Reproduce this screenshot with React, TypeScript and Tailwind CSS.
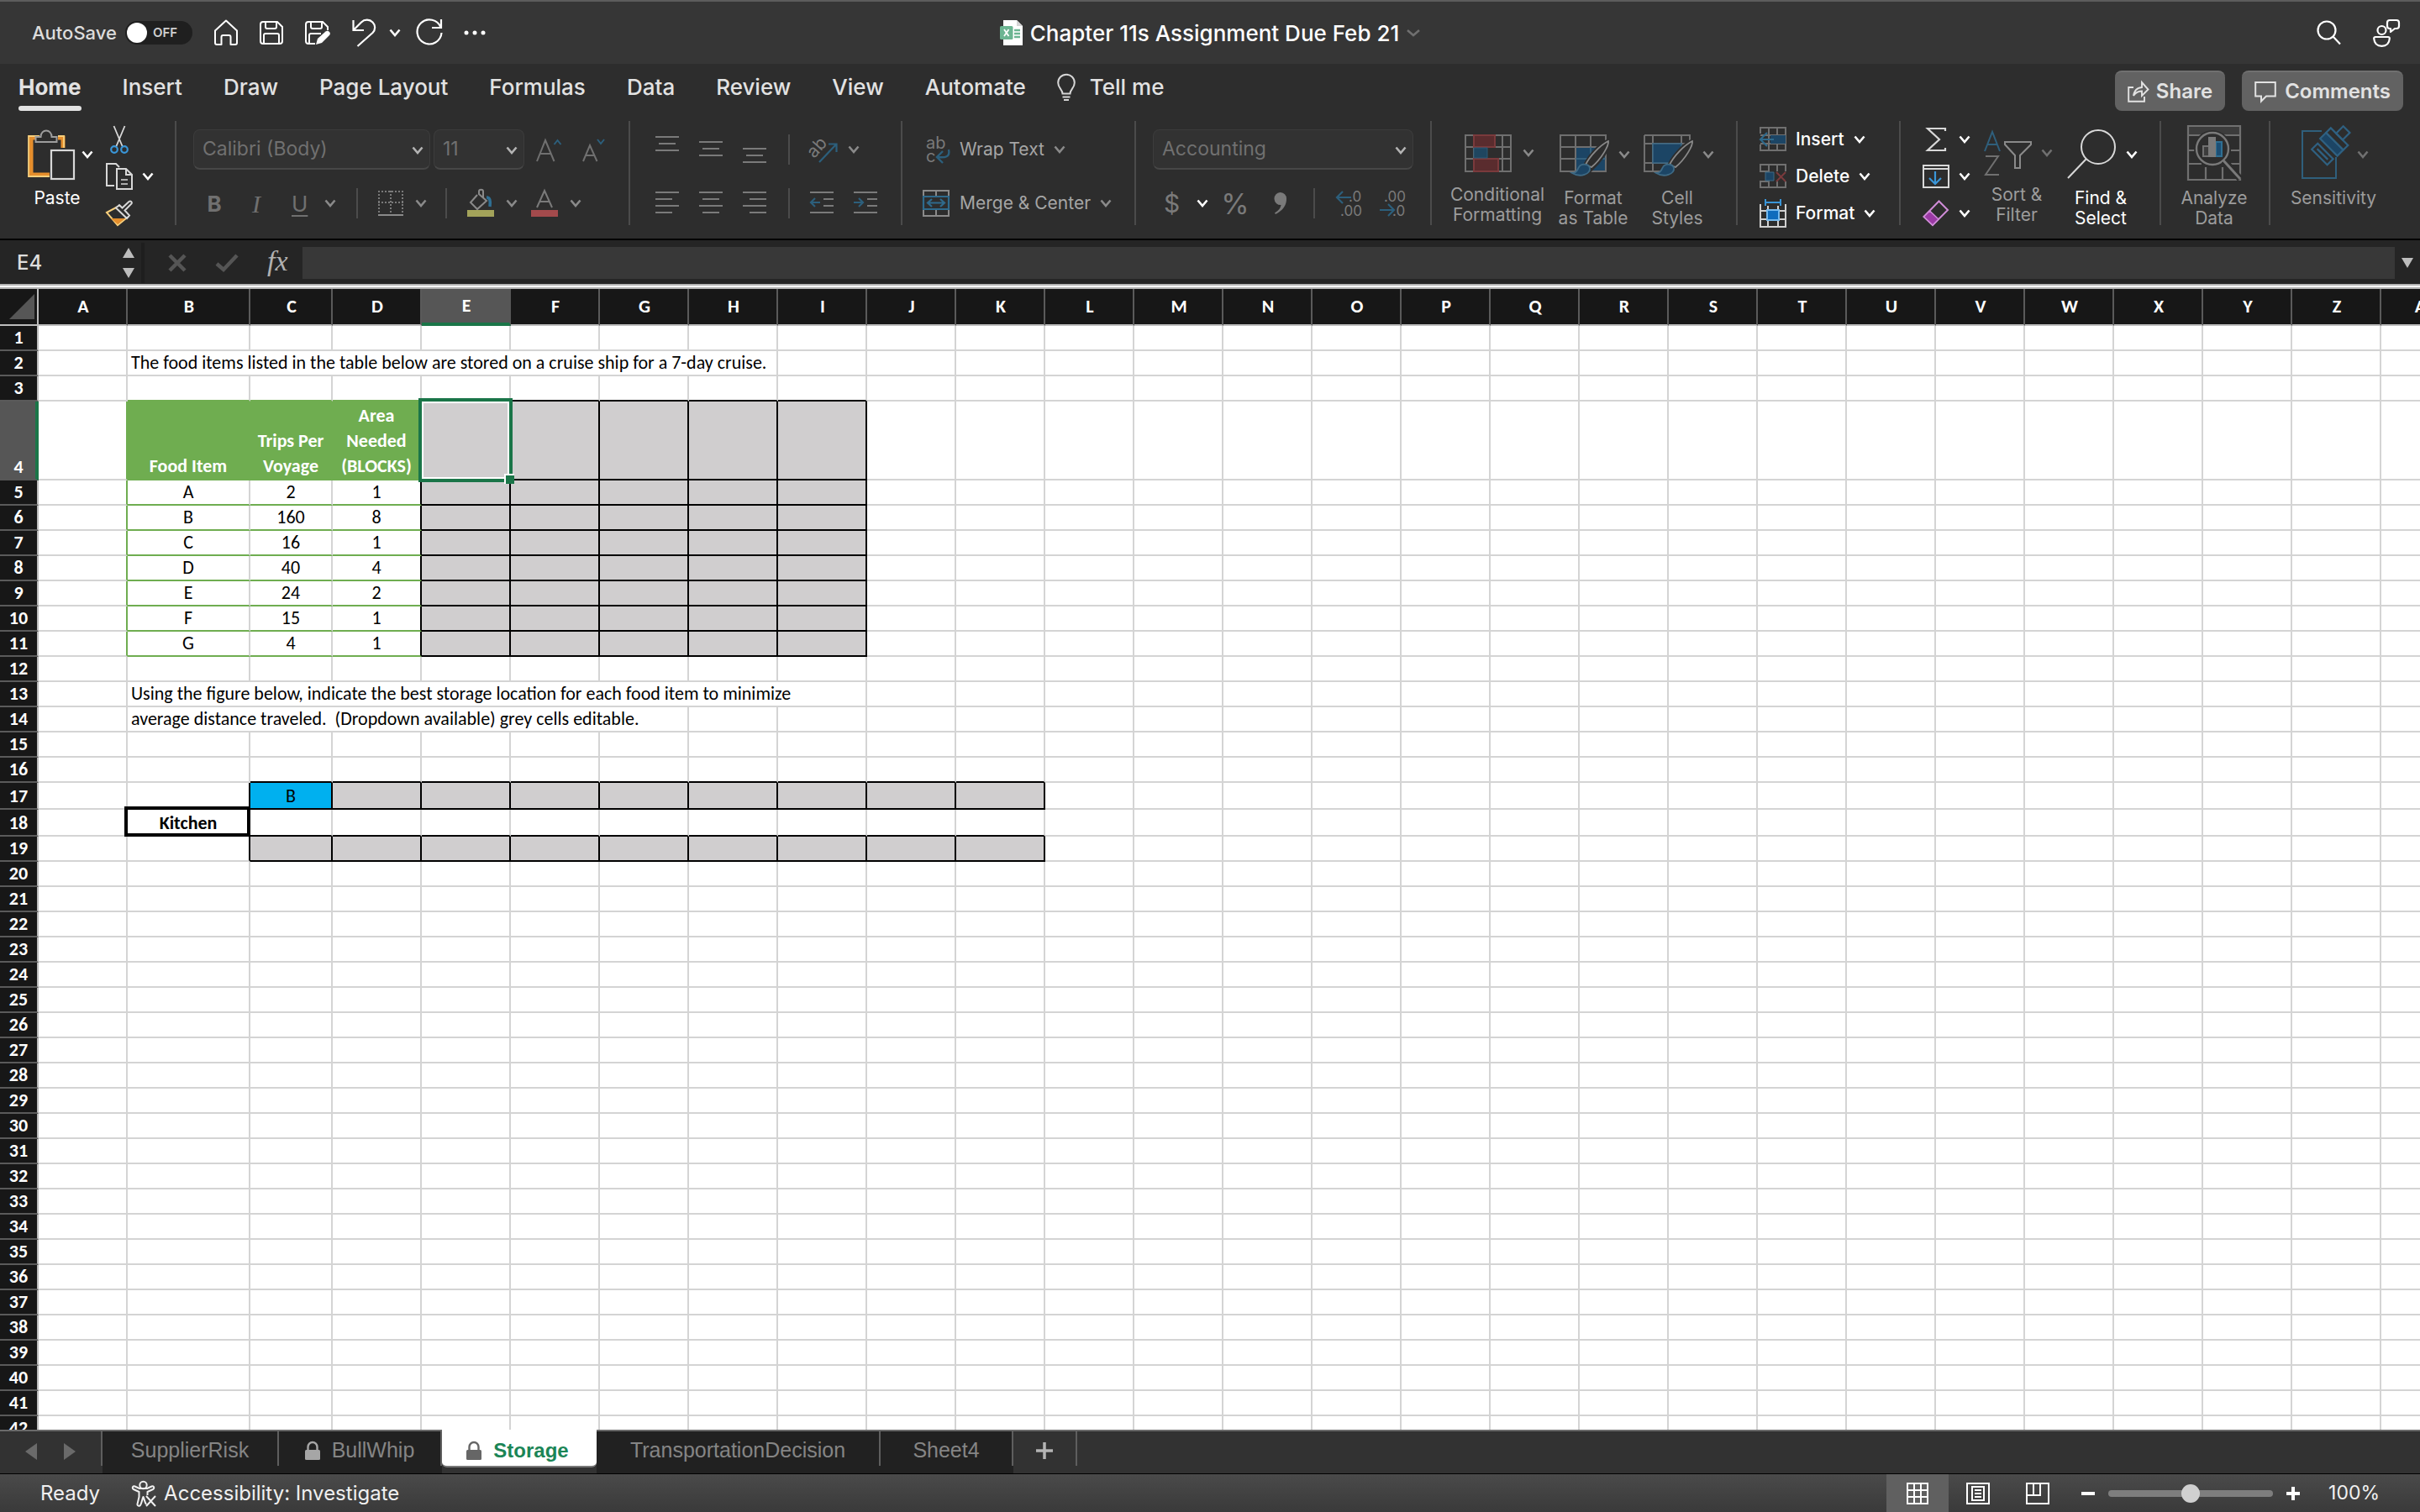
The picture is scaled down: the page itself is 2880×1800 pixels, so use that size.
import React from "react";

type Kids = { children?: React.ReactNode };

/* ---------- shared pieces ---------- */

function Chevron({ className = "text-[#8a8a8a]" }: { className?: string }) {
  return (
    <svg className={`h-[10px] w-[14px] shrink-0 ${className}`} viewBox="0 0 14 10" fill="none" stroke="currentColor" strokeWidth="2.6" aria-hidden="true">
      <path d="M1.5 1.5 7 8l5.5-6.5" />
    </svg>
  );
}

function Icon({ w, h, children, className = "" }: Kids & { w: number; h: number; className?: string }) {
  return (
    <svg width={w} height={h} viewBox={`0 0 ${w} ${h}`} fill="none" className={`shrink-0 overflow-visible ${className}`} aria-hidden="true">
      {children}
    </svg>
  );
}

function IconButton({ label, children, className = "" }: Kids & { label: string; className?: string }) {
  return (
    <button type="button" aria-label={label} className={`flex shrink-0 items-center ${className}`}>
      {children}
    </button>
  );
}

function Picker({ label, value, className }: { label: string; value: string; className: string }) {
  return (
    <div className={`relative h-12 ${className}`}>
      <select
        aria-label={label}
        defaultValue={value}
        className="h-12 w-full appearance-none rounded-lg border border-b-2 border-[#3c3c3c] border-b-[#474747] bg-[#323232] pl-[10px] text-[23px] text-[#707070]"
      >
        <option>{value}</option>
      </select>
      <Chevron className="pointer-events-none absolute top-5 right-2 text-[#b4b4b4]" />
    </div>
  );
}

function Group({ children, className = "" }: Kids & { className?: string }) {
  return <div className={`flex h-[124px] shrink-0 border-r-2 border-[#4b4b4b] ${className}`}>{children}</div>;
}

function BigButton({ icon, label, chevron, className = "" }: { icon: React.ReactNode; label: React.ReactNode; chevron?: string; className?: string }) {
  return (
    <button type="button" className={`flex shrink-0 flex-col items-center pt-[10px] text-[21px] leading-6 whitespace-nowrap ${className}`}>
      <span className="flex h-[60px] items-center gap-[10px]">
        {icon}
        {chevron && <Chevron className={chevron} />}
      </span>
      <span className={`mt-[10px] text-center ${chevron ? "mr-1" : ""}`}>{label}</span>
    </button>
  );
}

const Rule = ({ className = "" }: { className?: string }) => <span className={`h-9 w-[2px] shrink-0 bg-[#4b4b4b] ${className}`} />;

/* ---------- title bar ---------- */

function TitleBar() {
  return (
    <header className="grid h-[76px] shrink-0 grid-cols-[1fr_auto_1fr] items-center border-t-2 border-[#5c5c5c] bg-[#363636]">
      <div className="flex items-center pl-[38px] text-[#dcdcdc]">
        <label className="flex items-center gap-[10px] text-[22px] font-medium">
          AutoSave
          <input type="checkbox" role="switch" className="peer sr-only" />
          <span className="flex h-7 w-20 items-center gap-[7px] rounded-full bg-[#1f1f1f] pl-[2px] text-[15px] font-semibold text-[#cfcfcf]">
            <span className="h-6 w-6 rounded-full bg-white" />
            OFF
          </span>
        </label>
        <IconButton label="Home" className="ml-[26px]">
          <Icon w={28} h={32}>
            <path d="M1 13.5 14 1.5l13 12V28a2 2 0 0 1-2 2h-5.500V21a2 2 0 0 0-2-2h-7a2 2 0 0 0-2 2v9H3a2 2 0 0 1-2-2Z" stroke="#fff" strokeWidth="2" strokeLinejoin="round" />
          </Icon>
        </IconButton>
        <IconButton label="Save" className="ml-[26px]">
          <Icon w={28} h={28}>
            <path d="M4 1h17l6 6v17a3 3 0 0 1-3 3H4a3 3 0 0 1-3-3V4a3 3 0 0 1 3-3ZM7 1v6a2 2 0 0 0 2 2h9a2 2 0 0 0 2-2V1M5 27V17a2 2 0 0 1 2-2h14a2 2 0 0 1 2 2v10" stroke="#fff" strokeWidth="2" />
          </Icon>
        </IconButton>
        <IconButton label="Save as" className="ml-[26px]">
          <Icon w={30} h={29}>
            <path d="M12 27H4a3 3 0 0 1-3-3V4a3 3 0 0 1 3-3h17l6 6v4M7 1v6a2 2 0 0 0 2 2h9a2 2 0 0 0 2-2V1M5 27V17a2 2 0 0 1 2-2h12" stroke="#fff" strokeWidth="2" />
            <path d="m13 28 2-7 9.500-8.500a3.200 3.200 0 0 1 4.500 4.500L20 26Z" fill="#fff" />
          </Icon>
        </IconButton>
        <IconButton label="Undo" className="ml-[26px] gap-4">
          <Icon w={28} h={34}>
            <path d="M1.500 2v12H14M2 13.500 11 4.500c4-4 10-3.500 13.500 0s3.500 9 0 12.500L6.500 33" stroke="#fff" strokeWidth="2.200" />
          </Icon>
          <Chevron className="text-white" />
        </IconButton>
        <IconButton label="Redo" className="ml-[18px]">
          <Icon w={32} h={34}>
            <path d="M30 1v10H19M29.500 10.500A14.500 14.500 0 1 0 30.500 17" stroke="#fff" strokeWidth="2.200" />
          </Icon>
        </IconButton>
        <IconButton label="More" className="ml-6">
          <Icon w={28} h={6}>
            <g fill="#fff">
              <circle cx="4" cy="3" r="2.500" />
              <circle cx="14" cy="3" r="2.500" />
              <circle cx="24" cy="3" r="2.500" />
            </g>
          </Icon>
        </IconButton>
      </div>
      <button type="button" className="flex items-center gap-[9px] text-[26px] font-medium text-white">
        <Icon w={27} h={30}>
          <path d="M4 0h16l7 7v23H4Z" fill="#fff" />
          <path d="M20 0v7h7Z" fill="#d5d5d5" />
          <path d="M17 12h7M17 16h7M17 20h7" stroke="#6cb592" strokeWidth="2.500" />
          <rect y="7" width="15.500" height="16" rx="1.500" fill="#6cb592" />
          <path d="m5 11 5.500 8M10.500 11 5 19" stroke="#fff" strokeWidth="1.800" />
        </Icon>
        Chapter 11s Assignment Due Feb 21
        <svg className="h-[10px] w-4" viewBox="0 0 16 10" fill="none" stroke="#6f6f6f" strokeWidth="2.500" aria-hidden="true">
          <path d="m1 2 7 6 7-6" />
        </svg>
      </button>
      <div className="flex items-center justify-end gap-[38px] pr-6">
        <IconButton label="Search">
          <Icon w={29} h={30}>
            <circle cx="12" cy="12" r="10.500" stroke="#fff" strokeWidth="2.200" />
            <path d="m19.500 19.500 8.500 9" stroke="#fff" strokeWidth="2.200" />
          </Icon>
        </IconButton>
        <IconButton label="Coauthoring">
          <Icon w={32} h={34}>
            <g stroke="#fff" strokeWidth="2.200" strokeLinejoin="round">
              <circle cx="10.500" cy="14" r="5" />
              <path d="M3 22h15a1.800 1.800 0 0 1 1.800 2c-.5 6-4 8.800-9.300 8.800S1.700 30 1.200 24A1.800 1.800 0 0 1 3 22ZM20 2h8a3 3 0 0 1 3 3v4a3 3 0 0 1-3 3h-2l-5 4v-4h-1a3 3 0 0 1-3-3V5a3 3 0 0 1 3-3Z" />
            </g>
          </Icon>
        </IconButton>
      </div>
    </header>
  );
}

/* ---------- ribbon tabs ---------- */

const menus = ["Insert", "Draw", "Page Layout", "Formulas", "Data", "Review", "View", "Automate"];

function RibbonTabs() {
  return (
    <div className="flex h-[68px] shrink-0 justify-between bg-[#2d2d2d] text-[#e2e2e2]">
      <nav className="flex items-start gap-[49px] pt-[10px] pl-[22px] text-[26px] leading-9 font-medium whitespace-nowrap">
        <button type="button" className="flex flex-col font-bold">
          Home
          <span className="mt-1 h-[6px] w-full rounded-full bg-[#e2e2e2]" />
        </button>
        {menus.map((m) => (
          <button key={m} type="button">
            {m}
          </button>
        ))}
        <button type="button" className="-ml-[12px] flex items-center gap-[17px]">
          <Icon w={22} h={32}>
            <path d="M6.500 23.500c0-5-5.300-6.500-5.300-13A9.800 9.800 0 0 1 20.800 10.500c0 6.500-5.300 8-5.300 13ZM6.500 27.500h9M8 31h6" stroke="#d6d6d6" strokeWidth="2" />
          </Icon>
          Tell me
        </button>
      </nav>
      <div className="flex gap-5 pt-2 pr-5 text-2xl font-semibold">
        <button type="button" className="flex h-12 items-center gap-2 rounded-lg border-t-2 border-[#707070] bg-[#626262] px-[15px]">
          <Icon w={26} h={26}>
            <path d="M7 8H1.200v16.800H20V19M7 18C8 11 12 8.500 17 8V2l7.500 8.500L17 18v-5.500c-5 0-7.500 1.500-10 5.500Z" stroke="#e2e2e2" strokeWidth="1.900" />
          </Icon>
          Share
        </button>
        <button type="button" className="flex h-12 items-center gap-[10px] rounded-lg border-t-2 border-[#707070] bg-[#626262] px-[15px]">
          <Icon w={26} h={26}>
            <path d="M1.200 2h23.600v16.500H14L8 24.500v-6H1.200Z" stroke="#e2e2e2" strokeWidth="2" />
          </Icon>
          Comments
        </button>
      </div>
    </div>
  );
}

/* ---------- ribbon ---------- */

function Lines({ rows, h = 28, top = 1 }: { rows: [number, number][]; h?: number; top?: number }) {
  return (
    <Icon w={28} h={h}>
      {rows.map(([x, w], i) => (
        <path key={i} d={`M${x} ${top + i * 8}h${w}`} stroke="#7a7a7a" strokeWidth="2" />
      ))}
    </Icon>
  );
}

function Indent({ flip = false }: { flip?: boolean }) {
  return (
    <Icon w={28} h={28}>
      <path d="M0 1h28M16 9h12M16 17h12M0 25h28" stroke="#7a7a7a" strokeWidth="2" />
      <path d={flip ? "M0 13h11M6 8l5 5-5 5" : "M12 13H1M6 8l-5 5 5 5"} stroke="#2c5f7c" strokeWidth="2.200" />
    </Icon>
  );
}

function Brush() {
  return (
    <>
      <path d="M30 46c4-12 17-26 27-31 3 5-9 22-21 33Z" fill="#2d2d2d" stroke="#2d2d2d" strokeWidth="6" />
      <path d="M31 42C36 32 48 19 58 14c1 5-8 21-20 31Z" stroke="#8a8a8a" strokeWidth="1.800" fill="#2d2d2d" />
      <path d="M15 52c6 0 6-4 8-7 3-5 12-4 13 1 1 7-11 12-21 6Z" fill="#1c4565" stroke="#3e6a85" strokeWidth="1.800" />
    </>
  );
}

function Ribbon() {
  return (
    <section aria-label="Home ribbon" className="flex h-[142px] shrink-0 border-b-2 border-black bg-[#2d2d2d] text-[#9c9c9c]">
      <Group className="w-[210px] gap-[14px] pl-8">
        <BigButton
          className="w-20 text-white"
          chevron="text-white -ml-[2px]"
          label={<span className="mr-1">Paste</span>}
          icon={
            <Icon w={56} h={60}>
              <path d="M14 10H4v44h22M36 10h6v12" stroke="#e58e2c" strokeWidth="5" />
              <path d="M14 8H1v48h25M36 8h7v14" stroke="#f7cf7c" strokeWidth="1.800" />
              <path d="M9.500 15V9h6c0-10 13-10 13 0h6v6Z" stroke="#9d9d9d" strokeWidth="2" fill="#2d2d2d" />
              <rect x="28" y="25" width="27" height="34" stroke="#d8d8d8" strokeWidth="2.200" fill="#2d2d2d" />
            </Icon>
          }
        />
        <div className="flex flex-col">
          <IconButton label="Cut" className="h-11 pl-[5px]">
            <Icon w={22} h={34}>
              <path d="M4.500 1 15 26M17.500 1 7 26" stroke="#d8d8d8" strokeWidth="1.800" />
              <circle cx="5" cy="29" r="3.800" stroke="#3a96d8" strokeWidth="2.200" />
              <circle cx="17" cy="29" r="3.800" stroke="#3a96d8" strokeWidth="2.200" />
            </Icon>
          </IconButton>
          <IconButton label="Copy" className="h-11 gap-[11px]">
            <Icon w={32} h={32}>
              <path d="M10 27H1V1h11l4 4" stroke="#d8d8d8" strokeWidth="2" />
              <path d="M13 7h11l7 7v17H13ZM24 7v7h7" stroke="#d8d8d8" strokeWidth="2" />
              <path d="M18 20h8M18 25h8" stroke="#d8d8d8" strokeWidth="1.600" />
            </Icon>
            <Chevron className="text-white" />
          </IconButton>
          <IconButton label="Format painter" className="h-11">
            <Icon w={32} h={30}>
              <path d="m1 14 13-7 11 13-11 9Z" stroke="#f7cf7c" strokeWidth="2" />
              <path d="m6 21 17 0-9 7Z" fill="#e58e2c" />
              <path d="M12 8.500 25 21l3-3.500-5.500-6 8-8c1-2-1-4-3-2.500l-8 7.500L16 5Z" stroke="#d8d8d8" strokeWidth="2" fill="#2d2d2d" />
            </Icon>
          </IconButton>
        </div>
      </Group>

      <Group className="w-[540px] flex-col pt-[10px] pl-5">
        <div className="flex h-12 items-center">
          <Picker label="Font" value="Calibri (Body)" className="w-[282px]" />
          <Picker label="Font size" value="11" className="ml-1 w-[108px]" />
          <IconButton label="Increase font size" className="ml-[14px]">
            <Icon w={30} h={32}>
              <path d="M1 30 11 5l10.500 25M5 21h12.500" stroke="#707070" strokeWidth="2" />
              <path d="m21.500 10 4-5 4 5" stroke="#2c5f7c" strokeWidth="2" />
            </Icon>
          </IconButton>
          <IconButton label="Decrease font size" className="ml-[25px]">
            <Icon w={30} h={32}>
              <path d="m1 30 8-19 8.500 19M4 23h10" stroke="#707070" strokeWidth="2" />
              <path d="m18 4 4 5 4-5" stroke="#2c5f7c" strokeWidth="2" />
            </Icon>
          </IconButton>
        </div>
        <div className="mt-[22px] flex h-9 items-center text-[#707070]">
          <IconButton label="Bold" className="w-[50px] justify-center text-[26px] font-bold">B</IconButton>
          <IconButton label="Italic" className="w-[50px] justify-center font-['Liberation_Serif'] text-[30px] italic">I</IconButton>
          <IconButton label="Underline" className="w-[78px] gap-[20px] pl-[17px] text-[26px] underline underline-offset-4">
            U
            <Chevron />
          </IconButton>
          <Rule className="ml-[16px]" />
          <IconButton label="Borders" className="ml-6 gap-[14px]">
            <Icon w={30} h={30}>
              <path d="M0 1h30M1 0v28M29 0v28M15 0v28M0 14h30" stroke="#7a7a7a" strokeWidth="2" strokeDasharray="2 2" />
              <path d="M0 29h30" stroke="#8a8a8a" strokeWidth="2" />
            </Icon>
            <Chevron />
          </IconButton>
          <Rule className="ml-[22px]" />
          <IconButton label="Fill colour" className="ml-6 gap-[14px]">
            <Icon w={32} h={34}>
              <path d="M12 7 4 16l8 8 11-10-9-8V3c0-3 5-3 5 0v8" stroke="#8a8a8a" strokeWidth="2" />
              <path d="M23 10c4 0 5 4 4 11" stroke="#2f6f93" strokeWidth="3.500" />
              <rect y="25" width="32" height="8" fill="#a3a35a" />
            </Icon>
            <Chevron />
          </IconButton>
          <IconButton label="Font colour" className="ml-[16px] gap-[14px]">
            <Icon w={32} h={34}>
              <path d="m7 22 9-20 9 20M10 15h12" stroke="#7a7a7a" strokeWidth="2" />
              <rect y="25" width="32" height="8" fill="#a34a4c" />
            </Icon>
            <Chevron />
          </IconButton>
        </div>
      </Group>

      <Group className="w-[324px] flex-col pt-[10px] pl-[30px]">
        <div className="flex h-12 items-center gap-6">
          <IconButton label="Top align"><Lines h={36} top={3} rows={[[0, 28], [4, 20], [0, 28]]} /></IconButton>
          <IconButton label="Middle align"><Lines h={36} top={9} rows={[[0, 28], [4, 20], [0, 28]]} /></IconButton>
          <IconButton label="Bottom align"><Lines h={36} top={17} rows={[[0, 28], [4, 20], [0, 28]]} /></IconButton>
          <Rule className="ml-[2px]" />
          <IconButton label="Orientation" className="gap-[13px]">
            <Icon w={32} h={32}>
              <text x="-1" y="22" transform="rotate(-48 8 18)" fontSize="21" fill="#7a7a7a">ab</text>
              <path d="M11 31 31 10M22 9.500h9.500V19" stroke="#2c5f7c" strokeWidth="2.200" />
            </Icon>
            <Chevron />
          </IconButton>
        </div>
        <div className="mt-[22px] flex h-9 items-center gap-6">
          <IconButton label="Align left"><Lines rows={[[0, 28], [0, 20], [0, 28], [0, 20]]} /></IconButton>
          <IconButton label="Centre"><Lines rows={[[0, 28], [4, 20], [0, 28], [4, 20]]} /></IconButton>
          <IconButton label="Align right"><Lines rows={[[0, 28], [8, 20], [0, 28], [8, 20]]} /></IconButton>
          <Rule className="ml-[2px]" />
          <IconButton label="Decrease indent"><Indent /></IconButton>
          <IconButton label="Increase indent"><Indent flip /></IconButton>
        </div>
      </Group>

      <Group className="w-[278px] flex-col pt-[10px] pl-6 text-[21px] text-[#a5a5a5]">
        <button type="button" className="flex h-12 items-center gap-[11px] whitespace-nowrap">
          <Icon w={33} h={34}>
            <text x="4" y="16" fontSize="20" fill="#7a7a7a">ab</text>
            <text x="4" y="32" fontSize="20" fill="#7a7a7a">c</text>
            <path d="M31 17c2 9-4 10-13 9M24 19l-7 7 7 7" stroke="#2c5f7c" strokeWidth="2.400" />
          </Icon>
          Wrap Text
          <Chevron />
        </button>
        <button type="button" className="mt-[22px] flex h-9 items-center gap-[11px] whitespace-nowrap">
          <Icon w={33} h={32}>
            <path d="M1 8V1h30v7M1 23v8h30v-8M16 1v7M16 23v8" stroke="#8a8a8a" strokeWidth="2" />
            <path d="M1 8h30v15H1ZM6 15.500h20M11 11l-5 4.500 5 4.500M21 11l5 4.500-5 4.500" stroke="#2f6a8c" strokeWidth="2.200" />
          </Icon>
          Merge &amp; Center
          <Chevron />
        </button>
      </Group>

      <Group className="w-[352px] flex-col pt-[10px] pl-5">
        <Picker label="Number format" value="Accounting" className="w-[310px]" />
        <div className="mt-[22px] flex h-9 items-center text-[#7a7a7a]">
          <IconButton label="Currency" className="gap-5 pl-[13px] text-[30px]">
            $
            <Chevron className="text-white" />
          </IconButton>
          <IconButton label="Percent" className="ml-[15px] text-[34px]">%</IconButton>
          <IconButton label="Comma style" className="ml-7">
            <Icon w={18} h={26}>
              <path d="M8.500 0a7.500 7.500 0 0 1 7.500 8c0 8-5 14-13 18l-1-1.500c5-3 7-6 7.500-9.500A7.500 7.500 0 1 1 8.500 0Z" fill="#7a7a7a" />
            </Icon>
          </IconButton>
          <Rule className="ml-[30px]" />
          <IconButton label="Increase decimal" className="ml-[25px]">
            <Icon w={32} h={32}>
              <text x="15" y="14" fontSize="17" fill="#7a7a7a">.0</text>
              <text x="5" y="31" fontSize="17" fill="#7a7a7a">.00</text>
              <path d="M18 9H1M8 2 1 9l7 7" stroke="#2c5f7c" strokeWidth="2.200" />
            </Icon>
          </IconButton>
          <IconButton label="Decrease decimal" className="ml-5">
            <Icon w={32} h={32}>
              <text x="5" y="14" fontSize="17" fill="#7a7a7a">.00</text>
              <text x="15" y="31" fontSize="17" fill="#7a7a7a">.0</text>
              <path d="M0 24h17M10 17l7 7-7 7" stroke="#2c5f7c" strokeWidth="2.200" />
            </Icon>
          </IconButton>
        </div>
      </Group>

      <Group className="w-[364px] gap-4 pl-6">
        <BigButton
          className="w-28"
          chevron="text-[#8a8a8a] ml-[3px]"
          label={<>Conditional<br />Formatting</>}
          icon={
            <Icon w={56} h={48}>
              <path d="M1 3h54v43H1ZM1 17h54M1 31h54M11 3v43M45 3v43" stroke="#6f6f6f" strokeWidth="2" />
              <path d="M11 3h25v14H11ZM11 31h29v15H11Z" fill="#5a2c2e" stroke="#7a3a3c" strokeWidth="2" />
              <path d="M11 18h16v12H11Z" fill="#1f4660" stroke="#2d5a76" />
            </Icon>
          }
        />
        <BigButton
          className="w-[84px]"
          chevron="text-[#8a8a8a]"
          label={<>Format<br />as Table</>}
          icon={
            <Icon w={60} h={60}>
              <path d="M19 21h36v29H19Z" fill="#1c4565" />
              <path d="M1 7h54v43H1ZM1 21h54M1 35h18M19 7v43M37 7v14" stroke="#6f6f6f" strokeWidth="2" />
              <path d="M19 35h36M37 21v29" stroke="#3e6a85" strokeWidth="1.500" />
              <Brush />
            </Icon>
          }
        />
        <BigButton
          className="w-[84px]"
          chevron="text-[#8a8a8a]"
          label={<>Cell<br />Styles</>}
          icon={
            <Icon w={60} h={60}>
              <path d="M1 7h54v12M1 7v43h22M1 17h54M11 7v43M45 7v10M1 40h28" stroke="#6f6f6f" strokeWidth="2" />
              <path d="M11 17h34v23H11Z" fill="#1c4565" stroke="#3e6a85" strokeWidth="1.500" />
              <Brush />
            </Icon>
          }
        />
      </Group>

      <Group className="w-[194px] flex-col pl-[26px] text-[21px] font-medium text-white">
        <button type="button" className="flex h-11 shrink-0 items-center gap-[11px]">
          <Icon w={32} h={30}>
            <path d="M1 8V1h30v27H1v-7M1 10h30M1 20h30M11 1v27M21 1v27" stroke="#707070" strokeWidth="2" />
            <path d="M13 10h18v10H13Z" fill="#1c4565" />
            <path d="M17 15H2M9 7l-8 8 8 8" stroke="#2f6a8c" strokeWidth="2.200" />
          </Icon>
          Insert
          <Chevron className="text-white" />
        </button>
        <button type="button" className="flex h-11 shrink-0 items-center gap-[11px]">
          <Icon w={32} h={30}>
            <path d="M1 9V1h30v8M1 21v7h30v-7M11 1v8M21 1v8M11 21v7M21 21v7M0 9h12M0 21h12" stroke="#707070" strokeWidth="2" />
            <path d="M7 10h10v10H7Z" fill="#1c4565" stroke="#3e6a85" />
            <path d="m20 10 11 11M31 10 20 21" stroke="#7a3a3c" strokeWidth="2" />
          </Icon>
          Delete
          <Chevron className="text-white" />
        </button>
        <button type="button" className="flex h-11 shrink-0 items-center gap-[11px]">
          <Icon w={32} h={34}>
            <path d="M1 6v27h30V6M1 14h30M1 24h30M10 8v25M22 8v25" stroke="#d0d0d0" strokeWidth="2" />
            <path d="M9 13h14v12H9Z" fill="#0f6cbd" stroke="#76b9ed" strokeWidth="2" />
            <path d="M7 4h18M7 0v8M25 0v8" stroke="#3a96d8" strokeWidth="2" />
          </Icon>
          Format
          <Chevron className="text-white" />
        </button>
      </Group>

      <Group className="w-[310px] pl-[26px]">
        <div className="flex w-[58px] flex-col">
          <IconButton label="AutoSum" className="h-11 gap-[11px]">
            <Icon w={32} h={30}>
              <path d="M27 5V2H6l14 13L6 28h21v-3" stroke="#d8d8d8" strokeWidth="2.200" />
            </Icon>
            <Chevron className="text-white" />
          </IconButton>
          <IconButton label="Fill" className="h-11 gap-[11px]">
            <Icon w={32} h={28}>
              <path d="M1 1h30v26H1ZM1 5h30" stroke="#d8d8d8" strokeWidth="2" />
              <path d="M15 8v15M8 16l7 7 7-7" stroke="#3a96d8" strokeWidth="2.200" />
            </Icon>
            <Chevron className="text-white" />
          </IconButton>
          <IconButton label="Clear" className="h-11 gap-[11px]">
            <Icon w={32} h={32}>
              <path d="m1.500 20 18-18.500L30 12 12 30Z" stroke="#d08cd8" strokeWidth="2" />
              <path d="m1.500 20 7-7L19 23l-7 7Z" fill="#9b3aa5" stroke="#d08cd8" strokeWidth="1.500" />
            </Icon>
            <Chevron className="text-white" />
          </IconButton>
        </div>
        <BigButton
          className="ml-[14px] w-[84px]"
          chevron="text-[#707070]"
          label={<>Sort &amp;<br />Filter</>}
          icon={
            <Icon w={58} h={56}>
              <path d="m1 26 9-23 9 23M4 18h12" stroke="#2f5f7c" strokeWidth="2" />
              <path d="M2 32h15L2 54h16" stroke="#707070" strokeWidth="2" />
              <path d="M25 15h31v3L43 31v15h-6V31L25 18Z" stroke="#8a8a8a" strokeWidth="2" />
            </Icon>
          }
        />
        <BigButton
          className="ml-4 w-[84px] text-white"
          chevron="text-white"
          label={<>Find &amp;<br />Select</>}
          icon={
            <Icon w={60} h={60}>
              <circle cx="37" cy="21" r="20" stroke="#d8d8d8" strokeWidth="2" />
              <path d="M23 35 1 58" stroke="#d8d8d8" strokeWidth="2" />
            </Icon>
          }
        />
      </Group>

      <Group className="w-[130px] pl-6">
        <BigButton
          className="w-[78px]"
          label={<>Analyze<br />Data</>}
          icon={
            <Icon w={64} h={66} className="-mt-1">
              <path d="M2 2h60v10H2Z" fill="#3c3c3c" />
              <path d="M1 1h62v64H1ZM1 12h62M1 30h10M52 30h11M1 46h16M52 46h11M22 50v15M42 50v15" stroke="#707070" strokeWidth="2.200" />
              <circle cx="30" cy="28" r="22" fill="#2d2d2d" />
              <circle cx="30" cy="28" r="19" stroke="#7a7a7a" strokeWidth="2.400" />
              <path d="M19 25h7v12h-7Z" stroke="#707070" strokeWidth="2" fill="#3c3c3c" />
              <path d="M34 20h7v17h-7Z" fill="#1c4f75" stroke="#2f6f93" strokeWidth="2" />
              <path d="M25 14h9v24h-9Z" fill="#7a7a7a" />
              <path d="m44 42 19 22" stroke="#2d2d2d" strokeWidth="8" />
              <path d="m43 42 20 22" stroke="#7a7a7a" strokeWidth="3" />
            </Icon>
          }
        />
      </Group>

      <div className="flex flex-1 pl-[23px]">
        <BigButton
          className="w-[108px]"
          chevron="text-[#707070]"
          label="Sensitivity"
          icon={
            <Icon w={56} h={62} className="-mt-1">
              <path d="M24 5H1v56h40V36" stroke="#2f5f7c" strokeWidth="2" />
              <g transform="rotate(45 32 24)" stroke="#2f6182" strokeWidth="2.200">
                <path d="M18 14h29v10H18Z" fill="#1c4565" />
                <path d="M18 6h29v8H18Z" />
                <path d="M27-6h11V6H27Z" />
                <path d="M20 30h26v10H20ZM24 35h18" />
              </g>
            </Icon>
          }
        />
      </div>
    </section>
  );
}

/* ---------- formula bar ---------- */

function FormulaBar() {
  return (
    <div className="flex h-[52px] shrink-0 items-center bg-[#252525] pt-[2px]">
      <div className="flex h-12 w-[172px] items-center border-r-4 border-[#1e1e1e] pl-5">
        <input aria-label="Name box" defaultValue="E4" className="w-[120px] min-w-0 bg-transparent text-2xl font-medium text-[#dedede] outline-none" />
        <Icon w={14} h={38} className="ml-[6px]">
          <path d="M7 1l7 12H0ZM7 37l7-12H0Z" fill="#bdbdbd" />
        </Icon>
      </div>
      <IconButton label="Cancel" className="ml-7">
        <Icon w={22} h={22}>
          <path d="m2 2 18 18M20 2 2 20" stroke="#555" strokeWidth="4.500" />
        </Icon>
      </IconButton>
      <IconButton label="Enter" className="ml-[34px]">
        <Icon w={28} h={22}>
          <path d="m2 12 8 7L26 2" stroke="#555" strokeWidth="4.500" />
        </Icon>
      </IconButton>
      <IconButton label="Insert function" className="ml-[34px] w-[42px] pb-1 font-['Liberation_Serif'] text-[34px] leading-10 text-[#b0b0b0] italic">fx</IconButton>
      <input aria-label="Formula" className="h-[38px] min-w-0 flex-1 bg-[#383838] px-2 text-2xl text-white outline-none" />
      <IconButton label="Expand formula bar" className="mr-2 ml-2">
        <Icon w={14} h={12}>
          <path d="M0 0h14L7 12Z" fill="#bdbdbd" />
        </Icon>
      </IconButton>
    </div>
  );
}

/* ---------- worksheet ---------- */

const letters = "ABCDEFGHIJKLMNOPQRSTUVWXYZ".split("").concat("AA");
const rowNumbers = Array.from({ length: 42 }, (_, i) => i + 1);
const col = (l: string) => letters.indexOf(l);

const values: Record<string, string> = {
  B4: "Food Item", C4: "Trips Per Voyage", D4: "Area Needed (BLOCKS)",
  B5: "A", C5: "2", D5: "1",
  B6: "B", C6: "160", D6: "8",
  B7: "C", C7: "16", D7: "1",
  B8: "D", C8: "40", D8: "4",
  B9: "E", C9: "24", D9: "2",
  B10: "F", C10: "15", D10: "1",
  B11: "G", C11: "4", D11: "1",
  C17: "B", B18: "Kitchen",
};

const notes: Record<number, { text: string; span: number }> = {
  2: { text: "The food items listed in the table below are stored on a cruise ship for a 7-day cruise.", span: 7 },
  13: { text: "Using the figure below, indicate the best storage location for each food item to minimize", span: 8 },
  14: { text: "average distance traveled.  (Dropdown available) grey cells editable.", span: 6 },
};

const within = (c: number, r: number, c1: string, c2: string, r1: number, r2: number) =>
  c >= col(c1) && c <= col(c2) && r >= r1 && r <= r2;

const isEntry = (c: number, r: number) =>
  within(c, r, "E", "I", 4, 11) || within(c, r, "C", "K", 17, 17) || within(c, r, "C", "K", 19, 19);
const isTable = (c: number, r: number) => within(c, r, "B", "D", 4, 11);

function cellClass(c: number, r: number) {
  let right = "border-r-[#d4d4d4]";
  let bottom = "border-b-[#d4d4d4]";
  let look = "bg-white text-black";
  if (isEntry(c, r) || isEntry(c + 1, r)) right = "border-r-black";
  else if (c === 0 && isTable(1, r)) right = "border-r-[#6fad50]";
  if (isEntry(c, r) || isEntry(c, r + 1)) bottom = "border-b-black";
  else if (isTable(c, r) || isTable(c, r + 1)) bottom = "border-b-[#6fad50]";
  if (isEntry(c, r)) look = "bg-[#d0cecf] text-black";
  if (r === 4 && isTable(c, r)) {
    look = "bg-[#6fad50] text-white font-bold";
    if (letters[c] !== "D") right = "border-r-[#6fad50]";
  }
  if (r === 17 && letters[c] === "C") look = "bg-[#00b0ef] text-black";
  if (r === 18 && letters[c] === "B") look = "bg-white text-black font-bold";
  return `${right} ${bottom} ${look}`;
}

function Cell({ c, r }: { c: number; r: number }) {
  const ref = `${letters[c]}${r}`;
  return (
    <td className={`relative border-r-2 border-b-2 p-0 text-center align-bottom ${r === 4 ? "leading-[30px]" : "leading-7"} ${cellClass(c, r)}`}>
      {values[ref]}
      {ref === "E4" && (
        <span className="absolute -inset-1 z-10 border-4 border-[#1a7548]">
          <span className="absolute inset-0 border-2 border-white" />
          <span className="absolute -right-[6px] -bottom-[6px] h-3 w-3 border-t-2 border-l-2 border-white bg-[#1a7548]" />
        </span>
      )}
      {ref === "B18" && <span className="absolute -top-1 -right-[2px] -bottom-[2px] -left-1 z-10 border-4 border-black" />}
    </td>
  );
}

function SheetRow({ r }: { r: number }) {
  const note = notes[r];
  const height = r === 4 ? "h-[94px]" : r === 17 || r === 18 ? "h-8" : "h-[30px]";
  return (
    <tr className={height}>
      <th
        scope="row"
        className={`p-0 text-center align-bottom leading-7 font-bold text-white ${
          r === 4 ? "border-r-4 border-b-2 border-r-[#1a7548] border-b-[#565656] bg-[#565656] pl-[2px]" : "border-r-2 border-b-2 border-r-[#bdbdbd] border-b-[#5a5a5a] bg-[#171717]"
        }`}
      >
        {r}
      </th>
      {letters.map((_, c) => {
        if (note && c === 1)
          return (
            <td key={c} colSpan={note.span} className="border-r-2 border-b-2 border-[#d4d4d4] bg-white p-0 pl-1 leading-7 whitespace-pre text-black">
              {note.text}
            </td>
          );
        if (note && c > 1 && c < 1 + note.span) return null;
        return <Cell key={c} c={c} r={r} />;
      })}
    </tr>
  );
}

function Sheet() {
  return (
    <main className="min-h-0 flex-1 overflow-hidden bg-white">
      <div className="h-[6px] border-t-2 border-b-2 border-[#b4b4b4] bg-white" />
      <table className="w-[2940px] table-fixed border-separate border-spacing-0 font-['Carlito','Lato',sans-serif] text-[22px]">
        <colgroup>
          <col className="w-[46px]" />
          {letters.map((l) => (
            <col key={l} className={l === "B" ? "w-[146px]" : l === "C" ? "w-[98px]" : "w-[106px]"} />
          ))}
        </colgroup>
        <thead>
          <tr className="h-11">
            <th aria-label="Select all" className="border-r-2 border-b-2 border-[#bdbdbd] bg-[#171717] p-0">
              <Icon w={30} h={30} className="ml-[11px]">
                <path d="M30 0v30H0Z" fill="#565656" />
              </Icon>
            </th>
            {letters.map((l) => (
              <th
                key={l}
                scope="col"
                className={`p-0 pl-[2px] text-center leading-8 font-bold text-white ${
                  l === "E" ? "border-r-2 border-b-4 border-r-[#565656] border-b-[#1a7548] bg-[#565656]" : "border-r-2 border-b-2 border-r-[#5a5a5a] border-b-[#bdbdbd] bg-[#171717]"
                }`}
              >
                {l}
              </th>
            ))}
          </tr>
        </thead>
        <tbody>
          {rowNumbers.map((r) => (
            <SheetRow key={r} r={r} />
          ))}
        </tbody>
      </table>
    </main>
  );
}

/* ---------- sheet tabs ---------- */

function Lock({ className }: { className: string }) {
  return (
    <Icon w={18} h={24} className={className}>
      <rect y="11" width="18" height="12" rx="1.500" fill="currentColor" />
      <path d="M3.500 12V7.500a5.500 5.500 0 0 1 11 0V12" stroke="currentColor" strokeWidth="2.400" />
    </Icon>
  );
}

function SheetTab({ name, locked, width }: { name: string; locked?: boolean; width: string }) {
  return (
    <button type="button" role="tab" aria-selected="false" className={`flex h-full items-start bg-[#212121] ${width}`}>
      <span className="flex h-[41px] w-full items-center justify-center gap-[14px] border-r-2 border-[#5e5e5e] pt-1">
        {locked && <Lock className="text-[#a6a6a6]" />}
        {name}
      </span>
    </button>
  );
}

function SheetTabs() {
  return (
    <div className="flex h-[53px] shrink-0 border-t-2 border-b border-t-[#6a6a6a] border-b-black bg-[#323232] font-['Liberation_Sans',sans-serif] text-[25px] text-[#858585]">
      <div className="flex h-[41px] w-[122px] items-center gap-8 border-r-2 border-[#5e5e5e] pt-[6px] pl-[30px]">
        <IconButton label="Previous sheet">
          <Icon w={14} h={20}><path d="M14 0v20L0 10Z" fill="#6a6a6a" /></Icon>
        </IconButton>
        <IconButton label="Next sheet">
          <Icon w={14} h={20}><path d="M0 0v20l14-10Z" fill="#6a6a6a" /></Icon>
        </IconButton>
      </div>
      <div role="tablist" aria-label="Sheets" className="flex">
        <SheetTab name="SupplierRisk" width="w-[210px]" />
        <SheetTab name="BullWhip" locked width="w-[194px]" />
        <button type="button" role="tab" aria-selected="true" className="-mt-[2px] flex h-[45px] w-[184px] items-center justify-center gap-[14px] rounded-b-md border-b-2 border-[#777] bg-white pt-[6px] pr-1 text-2xl font-bold text-[#1b8556]">
          <Lock className="text-[#666]" />
          Storage
        </button>
        <SheetTab name="TransportationDecision" width="w-[338px]" />
        <SheetTab name="Sheet4" width="w-[158px]" />
      </div>
      <IconButton label="New sheet" className="h-[41px] w-[76px] justify-center border-r-2 border-[#5e5e5e] pt-1">
        <Icon w={22} h={22}><path d="M11 1v20M1 11h20" stroke="#b4b4b4" strokeWidth="3.500" /></Icon>
      </IconButton>
    </div>
  );
}

/* ---------- status bar ---------- */

function StatusBar() {
  return (
    <footer className="flex h-[45px] shrink-0 items-center justify-between bg-linear-to-b from-[#4a4a4a] to-[#3a3a3a] text-[24px] text-[#f0f0f0]">
      <div className="flex items-center pl-12">
        <span>Ready</span>
        <button type="button" className="ml-[38px] flex items-center gap-2">
          <Icon w={30} h={32}>
            <g stroke="#f0f0f0" strokeWidth="2" strokeLinejoin="round">
              <circle cx="13.500" cy="6" r="4.200" />
              <path d="M17 29c-2-3-2-6-3.500-9-1.500 3-1.500 7-3.500 10-1 1.500-4 .5-3.500-1.500L8.500 20v-6L2 11C0 10 .5 6.500 3.500 7.500L9 10h9l5.500-2.500c3-1 3.500 2.500 1.500 3.500l-6.500 3v4" />
              <path d="m17 19 11 12M28 19 17 31" />
            </g>
          </Icon>
          Accessibility: Investigate
        </button>
      </div>
      <div className="flex h-full items-center pr-12">
        <IconButton label="Normal view" className="h-full w-[74px] justify-center bg-[#606060]">
          <Icon w={26} h={26}><path d="M1 1h24v24H1ZM1 9h24M1 17h24M9 1v24M17 1v24" stroke="#fff" strokeWidth="2" /></Icon>
        </IconButton>
        <IconButton label="Page layout view" className="ml-[21px]">
          <Icon w={28} h={26}><path d="M1 1h26v24H1ZM7 5h14v16H7ZM10 9h8M10 13h8M10 17h8" stroke="#fff" strokeWidth="2" /></Icon>
        </IconButton>
        <IconButton label="Page break preview" className="ml-[43px]">
          <Icon w={28} h={26}><path d="M1 1h26v24H1ZM9 1v14M17 1v14M1 15h17" stroke="#fff" strokeWidth="2" /></Icon>
        </IconButton>
        <IconButton label="Zoom out" className="ml-[38px]">
          <Icon w={16} h={16}><path d="M0 8h16" stroke="#fff" strokeWidth="4" /></Icon>
        </IconButton>
        <input
          type="range"
          aria-label="Zoom"
          min={0}
          max={200}
          defaultValue={100}
          className="mx-4 h-2 w-[196px] appearance-none rounded-full bg-[#7e7e7e] [&::-webkit-slider-thumb]:h-[22px] [&::-webkit-slider-thumb]:w-[22px] [&::-webkit-slider-thumb]:appearance-none [&::-webkit-slider-thumb]:rounded-full [&::-webkit-slider-thumb]:bg-[#d0d0d0]"
        />
        <IconButton label="Zoom in">
          <Icon w={16} h={16}><path d="M0 8h16M8 0v16" stroke="#fff" strokeWidth="4" /></Icon>
        </IconButton>
        <span className="ml-[34px] text-[23px]">100%</span>
      </div>
    </footer>
  );
}

export default function App() {
  return (
    <div className="flex h-screen flex-col overflow-hidden bg-[#2d2d2d] font-['Inter',sans-serif]">
      <TitleBar />
      <RibbonTabs />
      <Ribbon />
      <FormulaBar />
      <Sheet />
      <SheetTabs />
      <StatusBar />
    </div>
  );
}
